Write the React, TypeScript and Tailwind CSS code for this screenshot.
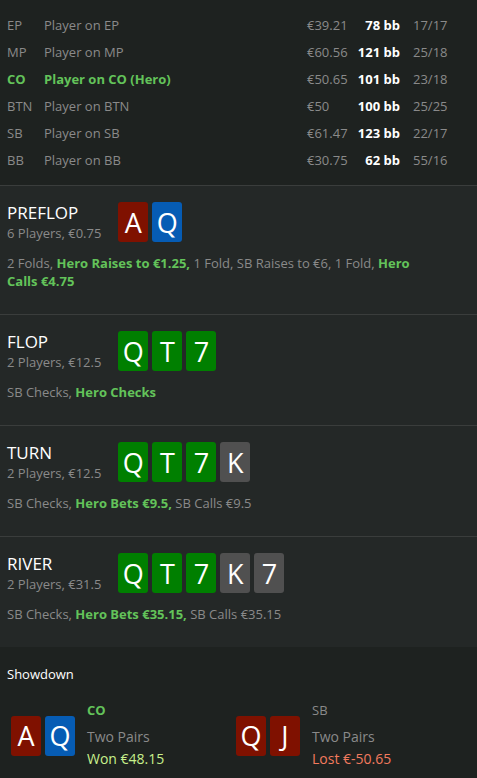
import React from "react";

type Card = { v: string; c: "red" | "blue" | "green" | "gray" };

const cardBg: Record<Card["c"], string> = {
  red: "bg-[#7f1100]",
  blue: "bg-[#065cb4]",
  green: "bg-[#007f00]",
  gray: "bg-[#505050]",
};

function CardBox({ card }: { card: Card }) {
  return (
    <div
      className={`${cardBg[card.c]} w-[30px] h-[40px] rounded-[3px] flex items-center justify-center text-white text-[27px] leading-none`}
    >
      {card.v}
    </div>
  );
}

const players = [
  { pos: "EP", name: "Player on EP", money: "€39.21", bb: "78 bb", stats: "17/17" },
  { pos: "MP", name: "Player on MP", money: "€60.56", bb: "121 bb", stats: "25/18" },
  { pos: "CO", name: "Player on CO (Hero)", money: "€50.65", bb: "101 bb", stats: "23/18", hero: true },
  { pos: "BTN", name: "Player on BTN", money: "€50", bb: "100 bb", stats: "25/25" },
  { pos: "SB", name: "Player on SB", money: "€61.47", bb: "123 bb", stats: "22/17" },
  { pos: "BB", name: "Player on BB", money: "€30.75", bb: "62 bb", stats: "55/16" },
];

type Seg = { t: string; hero?: boolean; br?: boolean };

const streets: { title: string; sub: string; cards: Card[]; actions: Seg[] }[] = [
  {
    title: "PREFLOP",
    sub: "6 Players, €0.75",
    cards: [
      { v: "A", c: "red" },
      { v: "Q", c: "blue" },
    ],
    actions: [
      { t: "2 Folds, " },
      { t: "Hero Raises to €1.25,", hero: true },
      { t: " 1 Fold, SB Raises to €6, 1 Fold, " },
      { t: "Hero", hero: true, br: true },
      { t: "Calls €4.75", hero: true },
    ],
  },
  {
    title: "FLOP",
    sub: "2 Players, €12.5",
    cards: [
      { v: "Q", c: "green" },
      { v: "T", c: "green" },
      { v: "7", c: "green" },
    ],
    actions: [{ t: "SB Checks, " }, { t: "Hero Checks", hero: true }],
  },
  {
    title: "TURN",
    sub: "2 Players, €12.5",
    cards: [
      { v: "Q", c: "green" },
      { v: "T", c: "green" },
      { v: "7", c: "green" },
      { v: "K", c: "gray" },
    ],
    actions: [
      { t: "SB Checks, " },
      { t: "Hero Bets €9.5,", hero: true },
      { t: " SB Calls €9.5" },
    ],
  },
  {
    title: "RIVER",
    sub: "2 Players, €31.5",
    cards: [
      { v: "Q", c: "green" },
      { v: "T", c: "green" },
      { v: "7", c: "green" },
      { v: "K", c: "gray" },
      { v: "7", c: "gray" },
    ],
    actions: [
      { t: "SB Checks, " },
      { t: "Hero Bets €35.15,", hero: true },
      { t: " SB Calls €35.15" },
    ],
  },
];

export default function App() {
  return (
    <div
      className="w-[477px] h-[778px] overflow-hidden bg-[#1e2220] text-[#8a8a8a]"
      style={{ fontFamily: '"Open Sans", "Noto Sans", sans-serif' }}
    >
      {/* players table */}
      <div className="pt-[12px] pb-[11px] border-b border-[#3a3d3c]">
        {players.map((p) => (
          <div key={p.pos} className="flex items-center h-[27px] text-[13px] pl-[7px]">
            <div className={`w-[37px] ${p.hero ? "text-[#63c35a] font-bold" : ""}`}>{p.pos}</div>
            <div className={`flex-1 ${p.hero ? "text-[#63c35a] font-bold" : ""}`}>{p.name}</div>
            <div className="w-[50px]">{p.money}</div>
            <div className="w-[43px] text-right text-white font-bold">{p.bb}</div>
            <div className="w-[77px] pl-[13px]">{p.stats}</div>
          </div>
        ))}
      </div>

      {/* streets */}
      {streets.map((s, i) => (
        <div
          key={s.title}
          className={`bg-[#242827] px-[7px] pt-[16px] pb-[24px] ${i < streets.length - 1 ? "border-b border-[#3a3d3c]" : ""}`}
        >
          <div className="flex items-center">
            <div className="mr-[17px]">
              <div className="text-white text-[17px] leading-[22px]">{s.title}</div>
              <div className="text-[13px] leading-[18px]">{s.sub}</div>
            </div>
            <div className="flex gap-[4px]">
              {s.cards.map((c, j) => (
                <CardBox key={j} card={c} />
              ))}
            </div>
          </div>
          <div className="mt-[12px] text-[13px] leading-[18px]">
            {s.actions.map((a, j) => (
              <React.Fragment key={j}>
                {a.hero ? (
                  <span className="text-[#63c35a] font-bold">{a.t}</span>
                ) : (
                  <span>{a.t}</span>
                )}
                {a.br ? <br /> : null}
              </React.Fragment>
            ))}
          </div>
        </div>
      ))}

      {/* showdown */}
      <div className="px-[7px] pt-[18px] pb-[20px]">
        <div className="text-white text-[13px] leading-[18px]">Showdown</div>
        <div className="flex mt-[18px] pl-[4px]">
          <div className="w-[225px] flex items-center">
            <div className="flex gap-[4px]">
              <CardBox card={{ v: "A", c: "red" }} />
              <CardBox card={{ v: "Q", c: "blue" }} />
            </div>
            <div className="ml-[12px]">
              <div className="text-[13px] leading-[18px] font-bold text-[#63c35a]">CO</div>
              <div className="text-[14px] leading-[22px] mt-[7px]">Two Pairs</div>
              <div className="text-[14px] leading-[22px] text-[#c8f08c]">Won €48.15</div>
            </div>
          </div>
          <div className="w-[225px] flex items-center">
            <div className="flex gap-[4px]">
              <CardBox card={{ v: "Q", c: "red" }} />
              <CardBox card={{ v: "J", c: "red" }} />
            </div>
            <div className="ml-[12px]">
              <div className="text-[13px] leading-[18px]">SB</div>
              <div className="text-[14px] leading-[22px] mt-[7px]">Two Pairs</div>
              <div className="text-[14px] leading-[22px] text-[#f27a5e]">Lost €-50.65</div>
            </div>
          </div>
        </div>
      </div>
    </div>
  );
}
